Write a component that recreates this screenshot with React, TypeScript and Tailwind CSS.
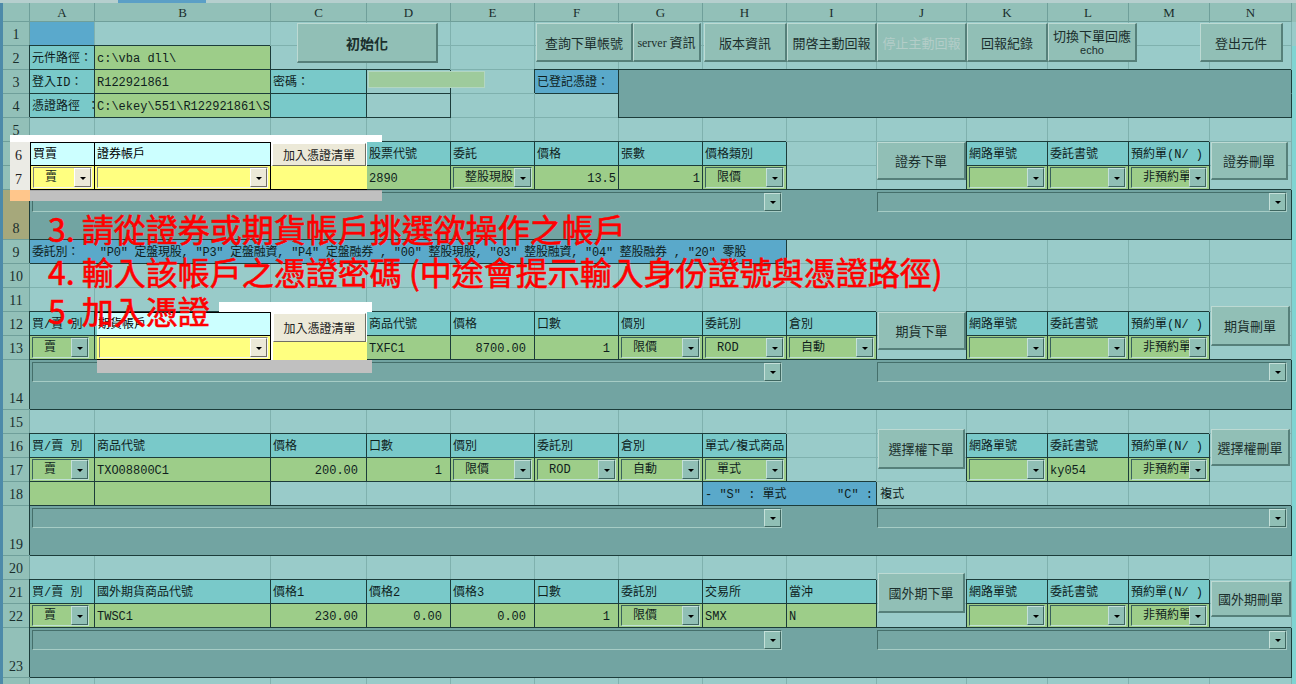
import React from 'react';

type K = 'def' | 'hdr' | 'grn' | 'blue' | 'sel' | 'dark' | 'darkT' | 'darkB';
type Cell = {
  s?: number;
  k?: K;
  b?: boolean;
  t?: string;
  r?: 'a' | 'b';
  combo?: string;
  narrow?: boolean;
  bars?: boolean;
  z?: boolean;
  tight?: boolean;
};

const TXT =
  "font-['Liberation_Mono','Noto_Sans_CJK_TC',monospace] text-[12px] leading-none text-[#0f1e1d] whitespace-pre";
const CJK = "font-['Noto_Sans_CJK_TC',sans-serif]";

const SPAN: Record<number, string> = {
  1: 'col-span-1',
  2: 'col-span-2',
  8: 'col-span-8',
  14: 'col-span-14',
};

const BG: Record<string, string> = {
  def: 'bg-[#99cbc9]',
  hdr: 'bg-[#79c9c9]',
  grn: 'bg-[#9dcd89]',
  blue: 'bg-[#5aa9ca]',
  sel: 'bg-[#5aa9cc]',
  dark: 'bg-[#72a4a2]',
};

const d = (n: number): Cell[] => Array.from({ length: n }, () => ({}));
const H = (t: string): Cell => ({ k: 'hdr', b: true, t });
const G = (t = '', r?: 'a' | 'b'): Cell => ({ k: 'grn', b: true, t, r });
const C = (combo = '', narrow = false): Cell => ({ k: 'grn', b: true, combo, narrow });
const DARK: Cell = { k: 'dark', b: true, s: 14, bars: true };

const ROWS: Cell[][] = [
  [{ k: 'sel' }, ...d(13)],
  [H('元件路徑：'), G('c:\\vba dll\\'), ...d(12)],
  [H('登入ID：'), G('R122921861'), H('密碼：'), { b: true }, {}, { k: 'blue', b: true, t: '已登記憑證：' }, { k: 'darkT', s: 8 }],
  [H('憑證路徑 ：'), G('C:\\ekey\\551\\R122921861\\S'), { k: 'hdr', b: true }, { b: true }, {}, {}, { k: 'darkB', s: 8 }],
  d(14),
  [H('買賣'), H('證券帳戶'), { b: true }, H('股票代號'), H('委託'), H('價格'), H('張數'), H('價格類別'), {}, {}, H('網路單號'), H('委託書號'), H('預約單(N/ )'), {}],
  [C('賣'), C(''), G(''), G('2890'), C('整股現股'), G('13.5', 'a'), G('1', 'a'), C('限價'), {}, {}, C(''), C(''), C('非預約單'), {}],
  [DARK],
  [
    {
      k: 'blue',
      b: true,
      s: 8,
      tight: true,
      t: '委託別：   "P0" 定盤現股, "P3" 定盤融資, "P4" 定盤融券 , "00" 整股現股, "03" 整股融資, "04" 整股融券 , "20" 零股',
    },
    ...d(6),
  ],
  d(14),
  d(14),
  [H('買/賣 別'), H('期貨帳戶'), { b: true }, H('商品代號'), H('價格'), H('口數'), H('價別'), H('委託別'), H('倉別'), {}, H('網路單號'), H('委託書號'), H('預約單(N/ )'), {}],
  [C('賣', true), C(''), G(''), G('TXFC1'), G('8700.00', 'b'), G('1', 'b'), C('限價'), C('ROD'), C('自動'), {}, C(''), C(''), C('非預約單'), {}],
  [DARK],
  d(14),
  [H('買/賣 別'), H('商品代號'), H('價格'), H('口數'), H('價別'), H('委託別'), H('倉別'), H('單式/複式商品'), {}, {}, H('網路單號'), H('委託書號'), H('預約單(N/ )'), {}],
  [C('賣', true), G('TXO08800C1'), G('200.00', 'b'), G('1', 'b'), C('限價'), C('ROD'), C('自動'), C('單式'), {}, {}, C(''), G('ky054'), C('非預約單'), {}],
  [G(''), G(''), ...d(5), { k: 'blue', b: true, s: 2, t: '- "S" : 單式       "C" : 複式', z: true }, ...d(5)],
  [DARK],
  d(14),
  [H('買/賣 別'), H('國外期貨商品代號'), H('價格1'), H('價格2'), H('價格3'), H('口數'), H('委託別'), H('交易所'), H('當沖'), {}, H('網路單號'), H('委託書號'), H('預約單(N/ )'), {}],
  [C('賣', true), G('TWSC1'), G('230.00', 'b'), G('0.00', 'b'), G('0.00', 'b'), G('1', 'b'), C('限價'), G('SMX'), G('N'), {}, C(''), C(''), C('非預約單'), {}],
  [DARK],
  d(14),
];

const HEAD = ['', 'A', 'B', 'C', 'D', 'E', 'F', 'G', 'H', 'I', 'J', 'K', 'L', 'M', 'N'];

function Drop({ bright, h }: { bright?: boolean; h: string }) {
  return (
    <div
      className={`w-[17px] ${h} shrink-0 border flex items-center justify-center ${
        bright
          ? 'bg-[#ece9d8] border-t-white border-l-white border-b-[#716f64] border-r-[#716f64]'
          : 'bg-[#90bfb5] border-t-[#c4e0d9] border-l-[#c4e0d9] border-b-[#3e6660] border-r-[#3e6660]'
      }`}
    >
      <div className="w-0 h-0 mt-[1px] border-l-[3px] border-r-[3px] border-t-[3px] border-l-transparent border-r-transparent border-t-black" />
    </div>
  );
}

function Combo({ text, narrow, bright }: { text?: string; narrow?: boolean; bright?: boolean }) {
  return (
    <div
      className={`relative h-[21px] ml-[2px] ${narrow ? 'w-[57px]' : 'flex-1 mr-[2px]'} border flex items-center ${
        bright
          ? 'border-t-[#808080] border-l-[#808080] border-b-[#f4f4f4] border-r-[#f4f4f4]'
          : 'border-t-[#3a625d] border-l-[#3a625d] border-b-[#bfe0d4] border-r-[#bfe0d4]'
      }`}
    >
      <span className={`${TXT} pl-[11px] pt-[1px]`}>{text}</span>
      <div className="absolute right-0 top-0">
        <Drop bright={bright} h="h-[19px]" />
      </div>
    </div>
  );
}

function Bar({ w }: { w: string }) {
  return (
    <div
      className={`${w} h-[20px] border border-t-[#456f6b] border-l-[#456f6b] border-b-[#a6ccc5] border-r-[#a6ccc5] bg-[#76a7a4] flex items-center justify-end`}
    >
      <Drop h="h-[18px]" />
    </div>
  );
}

function GridCell({ c }: { c: Cell }) {
  const k = c.k ?? 'def';
  let cls = `border-r border-b flex items-center min-w-0 whitespace-nowrap ${SPAN[c.s ?? 1]} `;
  if (k === 'darkT') {
    cls += 'bg-[#72a4a2] border-r-[#1c3c3a] border-b-[#72a4a2] shadow-[-1px_-1px_0_0_#1c3c3a]';
  } else if (k === 'darkB') {
    cls += 'bg-[#72a4a2] border-r-[#1c3c3a] border-b-[#1c3c3a] shadow-[-1px_0_0_0_#1c3c3a]';
  } else {
    cls += BG[k] + ' ';
    cls += c.b
      ? 'border-r-[#1c3c3a] border-b-[#1c3c3a] shadow-[-1px_-1px_0_0_#1c3c3a]'
      : 'border-r-[#7fb1ae] border-b-[#7fb1ae]';
  }
  if (c.r === 'a') cls += ' justify-end pr-[2px]';
  if (c.r === 'b') cls += ' justify-end pr-[8px]';

  let inner: React.ReactNode = null;
  if (c.bars) {
    inner = (
      <div className="flex self-start pt-[2px] pl-[2px]">
        <Bar w="w-[750px]" />
        <div className="w-[95px]" />
        <Bar w="w-[410px]" />
      </div>
    );
  } else if (c.combo !== undefined) {
    inner = <Combo text={c.combo} narrow={c.narrow} />;
  } else if (c.t) {
    inner = (
      <span
        className={`${TXT} ${c.r ? '' : 'pl-[2px]'} pt-[2px] ${c.z ? 'relative z-[1]' : ''} ${
          c.tight ? 'tracking-[-0.25px]' : ''
        }`}
      >
        {c.t}
      </span>
    );
  }
  return <div className={cls}>{inner}</div>;
}

function RowHead({ n }: { n: number }) {
  return (
    <div
      className={`border-r border-b border-r-[#6f9f9a] border-b-[#6f9f9a] ${
        n === 8 ? 'bg-[#a6a87b]' : 'bg-[#92c0b8]'
      } flex items-end justify-center pb-[3px] font-['Liberation_Serif',serif] text-[14px] leading-none text-[#1a2e2c]`}
    >
      {n === 24 ? '' : n}
    </div>
  );
}

const BTN =
  "absolute flex items-center justify-center bg-[#91bfb6] border-t border-l border-t-[#bddad3] border-l-[#bddad3] border-b-2 border-r-2 border-b-[#56807a] border-r-[#56807a] font-['Noto_Sans_CJK_TC',sans-serif] text-[13px] leading-none text-[#1b2f2d] whitespace-nowrap";

const BUTTONS: { cls: string; t: React.ReactNode }[] = [
  { cls: 'left-[297px] top-[23px] w-[141px] h-[40px] font-bold text-[14px]', t: '初始化' },
  { cls: 'left-[536px] top-[23px] w-[97px] h-[39px]', t: '查詢下單帳號' },
  {
    cls: 'left-[633px] top-[23px] w-[68px] h-[39px]',
    t: (
      <span>
        <span className="font-['Liberation_Serif',serif] text-[12px]">server</span> 資訊
      </span>
    ),
  },
  { cls: 'left-[704px] top-[23px] w-[83px] h-[39px]', t: '版本資訊' },
  { cls: 'left-[787px] top-[23px] w-[90px] h-[39px]', t: '開啓主動回報' },
  { cls: 'left-[877px] top-[23px] w-[90px] h-[39px] text-[#b3cdc8]', t: '停止主動回報' },
  { cls: 'left-[967px] top-[23px] w-[81px] h-[39px]', t: '回報紀錄' },
  {
    cls: 'left-[1048px] top-[23px] w-[89px] h-[39px]',
    t: (
      <span className="flex flex-col items-center gap-[3px]">
        <span className="text-[13px]">切換下單回應</span>
        <span className="font-['Liberation_Sans',sans-serif] text-[11px]">echo</span>
      </span>
    ),
  },
  { cls: 'left-[1200px] top-[23px] w-[83px] h-[39px]', t: '登出元件' },
  { cls: 'left-[877px] top-[142px] w-[89px] h-[38px]', t: '證券下單' },
  { cls: 'left-[1211px] top-[142px] w-[77px] h-[38px]', t: '證券刪單' },
  { cls: 'left-[878px] top-[312px] w-[88px] h-[38px]', t: '期貨下單' },
  { cls: 'left-[1211px] top-[306px] w-[79px] h-[40px]', t: '期貨刪單' },
  { cls: 'left-[878px] top-[429px] w-[87px] h-[40px]', t: '選擇權下單' },
  { cls: 'left-[1211px] top-[429px] w-[79px] h-[37px]', t: '選擇權刪單' },
  { cls: 'left-[878px] top-[573px] w-[87px] h-[40px]', t: '國外期下單' },
  { cls: 'left-[1211px] top-[581px] w-[80px] h-[36px]', t: '國外期刪單' },
];

function BeigeBtn({ cls }: { cls: string }) {
  return (
    <div
      className={`${cls} bg-[#ece9d8] border border-t-white border-l-white border-b-[#716f64] border-r-[#716f64] flex items-center justify-center ${CJK} text-[12px] leading-none text-[#222222] whitespace-nowrap`}
    >
      加入憑證清單
    </div>
  );
}

const SPOT_TXT = `${TXT} text-[#000000] pt-[2px]`;
const RED = `absolute left-[48px] ${CJK} text-[32px] leading-none text-[#ff0000] whitespace-pre [-webkit-text-stroke:0.6px_#ff0000]`;

export default function App() {
  return (
    <div className="relative w-[1296px] h-[684px] overflow-hidden bg-[#99cbc9]">
      <div className="flex h-[3px]">
        <div className="w-[118px] bg-[#b6cfce]" />
        <div className="w-[88px] bg-[#5b9fc6]" />
        <div className="flex-1 bg-[#b6cfce]" />
      </div>
      <div className="flex">
        <div className="w-[3px] bg-[#4d8aa9]" />
        <div className="grid grid-cols-[27px_65px_176px_96px_84px_84px_84px_84px_84px_90px_90px_81px_81px_81px_82px_4px] grid-rows-[19px_repeat(7,24px)_50px_repeat(5,24px)_50px_repeat(4,24px)_50px_repeat(3,24px)_50px_24px]">
          {HEAD.map((h, i) => (
            <div
              key={'h' + i}
              className="border-r border-b border-r-[#6f9f9a] border-b-[#6f9f9a] bg-[#92c0b8] flex items-center justify-center pt-[1px] font-['Liberation_Serif',serif] text-[13px] leading-none text-[#1a2e2c]"
            >
              {h}
            </div>
          ))}
          <div className="bg-[#92c0b8]" />
          {ROWS.map((row, i) => (
            <React.Fragment key={i}>
              <RowHead n={i + 1} />
              {row.map((c, j) => (
                <GridCell key={j} c={c} />
              ))}
              <div className={i === 0 ? 'bg-[#99cbc9]' : 'bg-[#7fd4d2]'} />
            </React.Fragment>
          ))}
        </div>
      </div>

      {/* password textbox */}
      <div className="absolute left-[368px] top-[71px] w-[117px] h-[17px] bg-[#9ecb9c] border border-[#b3d6c2]" />

      {/* form buttons */}
      {BUTTONS.map((b, i) => (
        <div key={i} className={`${BTN} ${b.cls}`}>
          {b.t}
        </div>
      ))}

      {/* spotlight 1 */}
      <div className="absolute left-[10px] top-[135px] w-[372px] flex flex-col">
        <div className="h-[7px] bg-white" />
        <div className="flex w-[357px] h-[24px]">
          <div className="w-[20px] bg-[#ebebe5] flex items-end pl-[5px] pb-[3px] font-['Liberation_Serif',serif] text-[14px] leading-none text-[#222222]">
            6
          </div>
          <div className="w-[65px] bg-[#ccffff] border border-black flex items-center pl-[2px]">
            <span className={SPOT_TXT}>買賣</span>
          </div>
          <div className="w-[176px] bg-[#ccffff] border-t border-b border-r border-black flex items-center pl-[2px]">
            <span className={SPOT_TXT}>證券帳戶</span>
          </div>
          <div className="w-[96px] bg-white pl-[1px] pt-[1px]">
            <BeigeBtn cls="w-[94px] h-[23px]" />
          </div>
        </div>
        <div className="flex w-[357px] h-[24px]">
          <div className="w-[20px] bg-[#ebebe5] flex items-end pl-[5px] pb-[3px] font-['Liberation_Serif',serif] text-[14px] leading-none text-[#222222]">
            7
          </div>
          <div className="w-[65px] bg-[#ffff80] border-l border-b border-r border-black flex items-center">
            <Combo text="賣" bright />
          </div>
          <div className="w-[176px] bg-[#ffff80] border-b border-r border-black flex items-center">
            <Combo text="" bright />
          </div>
          <div className="w-[96px] bg-[#ffff80] border-b border-black" />
        </div>
        <div className="flex h-[11px]">
          <div className="w-[20px] bg-[#ffc68b]" />
          <div className="flex-1 bg-[#c0c0c0] border-t border-[#a8a8a8]" />
        </div>
      </div>

      {/* spotlight 2 */}
      <div className="absolute left-[219px] top-[302px] w-[153px] h-[10px] bg-white" />
      <div className="absolute left-[97px] top-[312px] w-[275px] flex flex-col">
        <div className="flex w-[270px] h-[48px]">
          <div className="w-[174px] flex flex-col">
            <div className="h-[24px] bg-[#ccffff] border-t border-b border-r border-black flex items-center pl-[1px]">
              <span className={SPOT_TXT}>期貨帳戶</span>
            </div>
            <div className="h-[24px] bg-[#ffff80] border-b border-r border-black flex items-center">
              <Combo text="" bright />
            </div>
          </div>
          <div className="w-[96px] bg-white flex flex-col pl-[2px] pt-[1px]">
            <BeigeBtn cls="w-[93px] h-[29px]" />
            <div className="flex-1 bg-[#ffff80]" />
          </div>
        </div>
        <div className="h-[13px] bg-[#c0c0c0]" />
      </div>

      {/* annotations */}
      <div className={`${RED} top-[212px]`}>3. 請從證券或期貨帳戶挑選欲操作之帳戶</div>
      <div className={`${RED} top-[255px]`}>4. 輸入該帳戶之憑證密碼 (中途會提示輸入身份證號與憑證路徑)</div>
      <div className={`${RED} top-[294px]`}>5. 加入憑證</div>
    </div>
  );
}
